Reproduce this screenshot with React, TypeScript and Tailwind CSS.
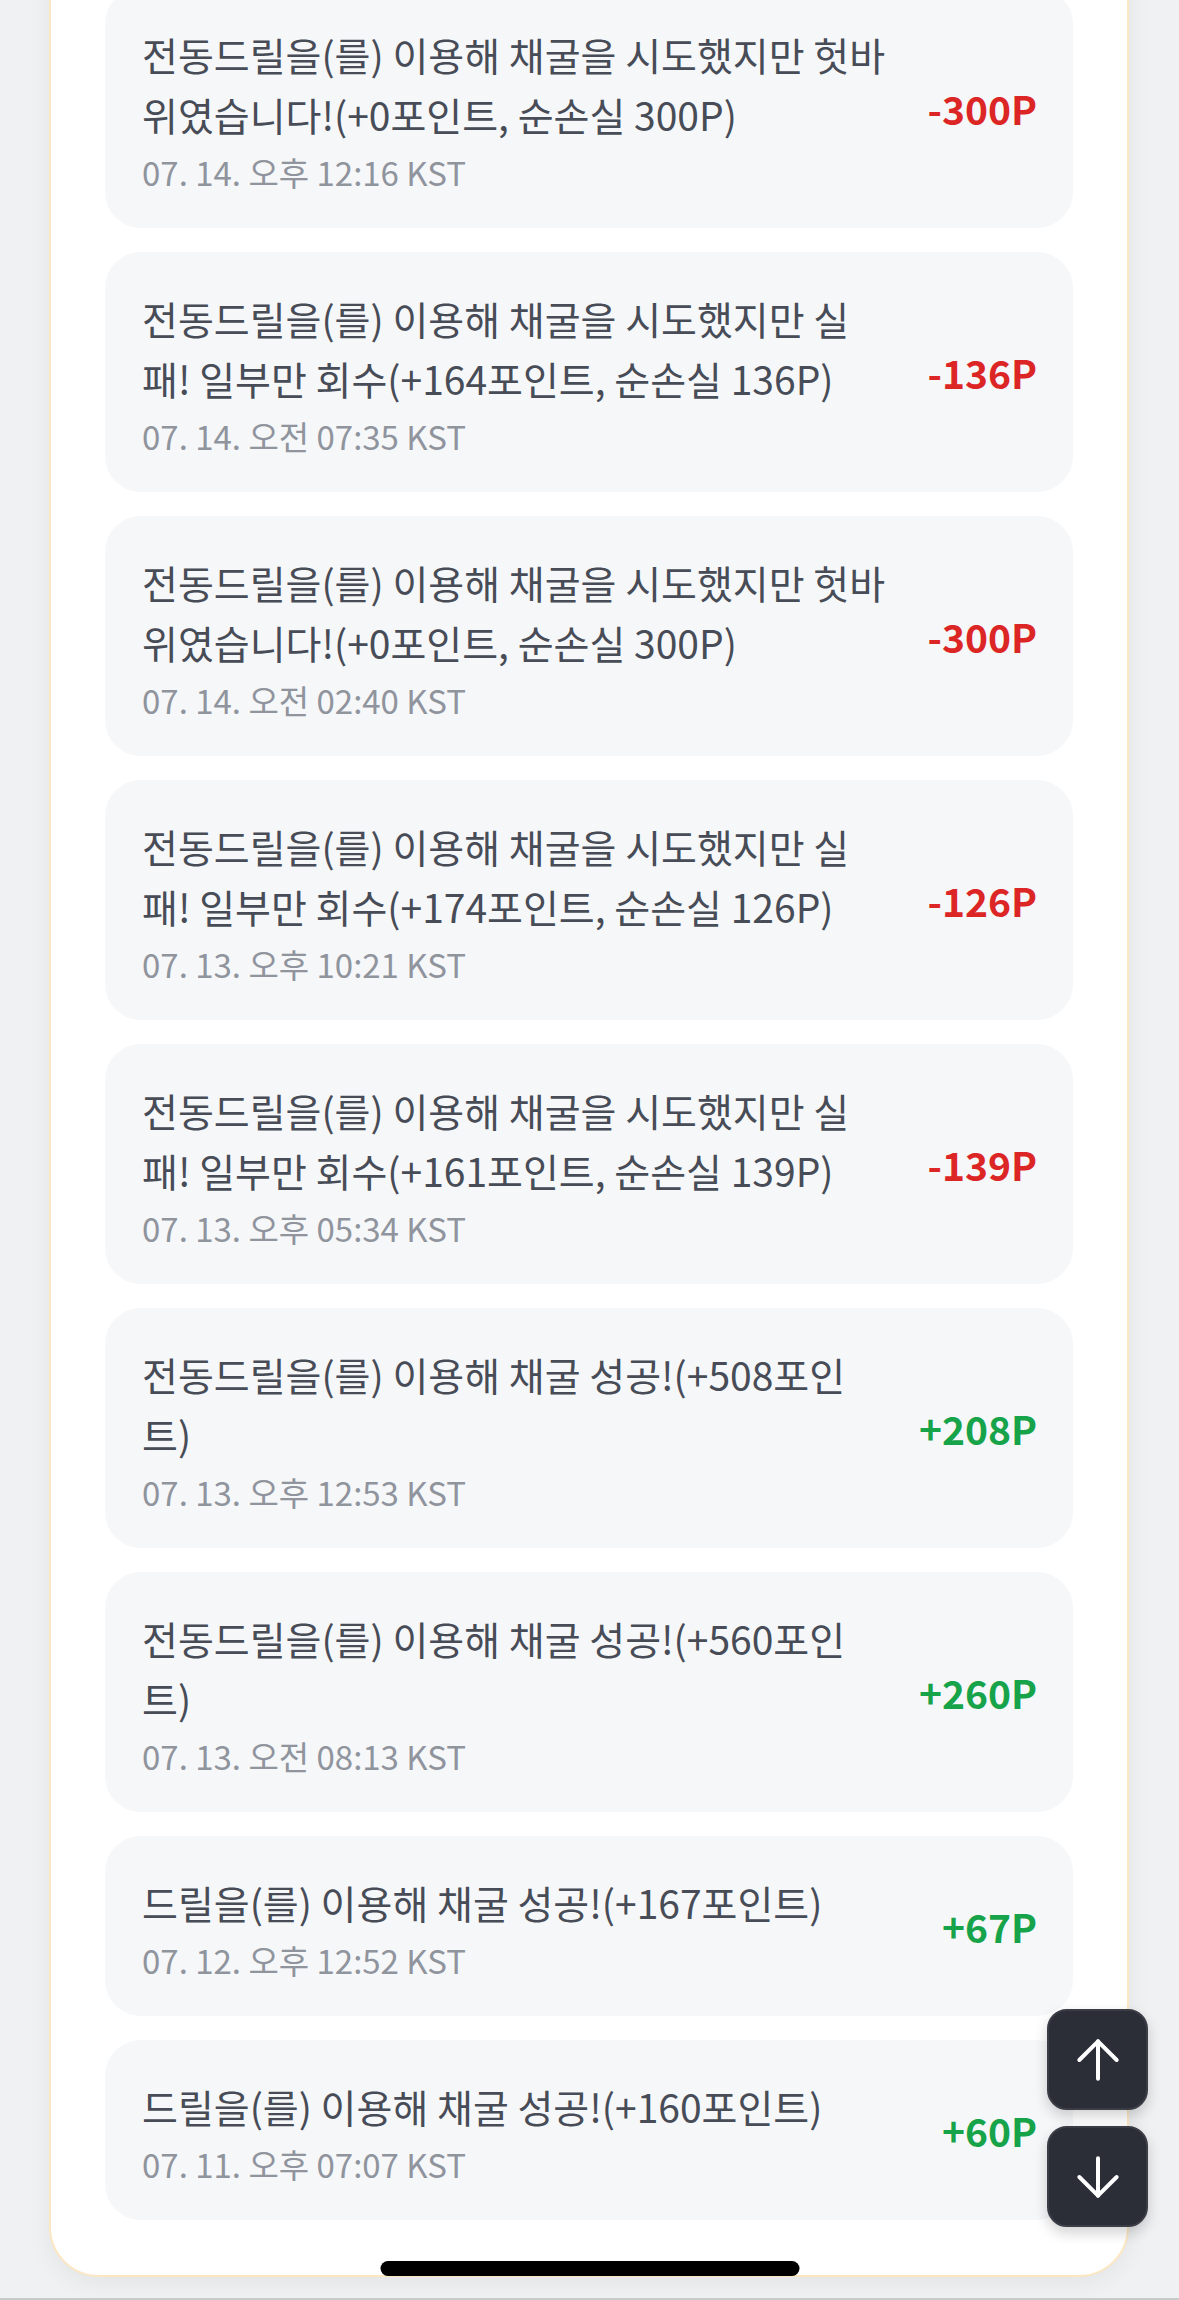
import { ArrowUp, ArrowDown } from 'lucide-react';

const history = [
  { text: '전동드릴을(를) 이용해 채굴을 시도했지만 헛바위였습니다!(+0포인트, 순손실 300P)', date: '07. 14. 오후 12:16 KST', amount: -300 },
  { text: '전동드릴을(를) 이용해 채굴을 시도했지만 실패! 일부만 회수(+164포인트, 순손실 136P)', date: '07. 14. 오전 07:35 KST', amount: -136 },
  { text: '전동드릴을(를) 이용해 채굴을 시도했지만 헛바위였습니다!(+0포인트, 순손실 300P)', date: '07. 14. 오전 02:40 KST', amount: -300 },
  { text: '전동드릴을(를) 이용해 채굴을 시도했지만 실패! 일부만 회수(+174포인트, 순손실 126P)', date: '07. 13. 오후 10:21 KST', amount: -126 },
  { text: '전동드릴을(를) 이용해 채굴을 시도했지만 실패! 일부만 회수(+161포인트, 순손실 139P)', date: '07. 13. 오후 05:34 KST', amount: -139 },
  { text: '전동드릴을(를) 이용해 채굴 성공!(+508포인트)', date: '07. 13. 오후 12:53 KST', amount: 208 },
  { text: '전동드릴을(를) 이용해 채굴 성공!(+560포인트)', date: '07. 13. 오전 08:13 KST', amount: 260 },
  { text: '드릴을(를) 이용해 채굴 성공!(+167포인트)', date: '07. 12. 오후 12:52 KST', amount: 67 },
  { text: '드릴을(를) 이용해 채굴 성공!(+160포인트)', date: '07. 11. 오후 07:07 KST', amount: 60 },
];

export default function App() {
  return (
    <div
      className="relative h-[2300px] overflow-hidden bg-[#f0f1f3]"
      style={{ fontFamily: '"Noto Sans CJK KR", "Noto Sans", sans-serif' }}
    >
      {/* Panel (scrolled) */}
      <div className="ml-[49px] mr-[50px] -mt-[60px] rounded-b-[50px] border-2 border-[#fbe7c2] bg-white px-[54px] pt-[46px] pb-[55px] shadow-[0_6px_24px_rgba(0,0,0,0.06)]">
        <div className="flex flex-col gap-6">
          {history.map((item, i) => (
            <div
              key={i}
              className="flex items-center gap-[40px] rounded-[36px] bg-[#f6f7f9] py-[36px] pl-[37px] pr-[36px]"
            >
              <div className="min-w-0 flex-1">
                <p className="break-all text-[39px] leading-[60px] text-[#474c57]">{item.text}</p>
                <p className="mt-2 text-[33px] leading-[40px] text-[#8f949d]">{item.date}</p>
              </div>
              <span
                className={`shrink-0 text-[39px] font-bold leading-[60px] ${
                  item.amount < 0 ? 'text-[#dc2626]' : 'text-[#16a34a]'
                }`}
              >
                {item.amount < 0 ? `-${Math.abs(item.amount)}P` : `+${item.amount}P`}
              </span>
            </div>
          ))}
        </div>
      </div>

      {/* Scroll buttons */}
      <div className="absolute bottom-[73px] right-[31px] flex flex-col gap-4">
        <button className="flex h-[101px] w-[101px] items-center justify-center rounded-[20px] border-2 border-[#3a3c46] bg-[#2b2d37] text-white shadow-[0_6px_14px_rgba(0,0,0,0.18)]">
          <ArrowUp size={64} strokeWidth={1.5} />
        </button>
        <button className="flex h-[101px] w-[101px] items-center justify-center rounded-[20px] border-2 border-[#3a3c46] bg-[#2b2d37] text-white shadow-[0_6px_14px_rgba(0,0,0,0.18)]">
          <ArrowDown size={64} strokeWidth={1.5} />
        </button>
      </div>

      {/* Home indicator */}
      <div className="absolute bottom-[24px] left-1/2 h-[15px] w-[419px] -translate-x-1/2 rounded-full bg-black" />
      <div className="absolute bottom-0 left-0 h-[2px] w-full bg-[#c9cacc]" />
    </div>
  );
}
